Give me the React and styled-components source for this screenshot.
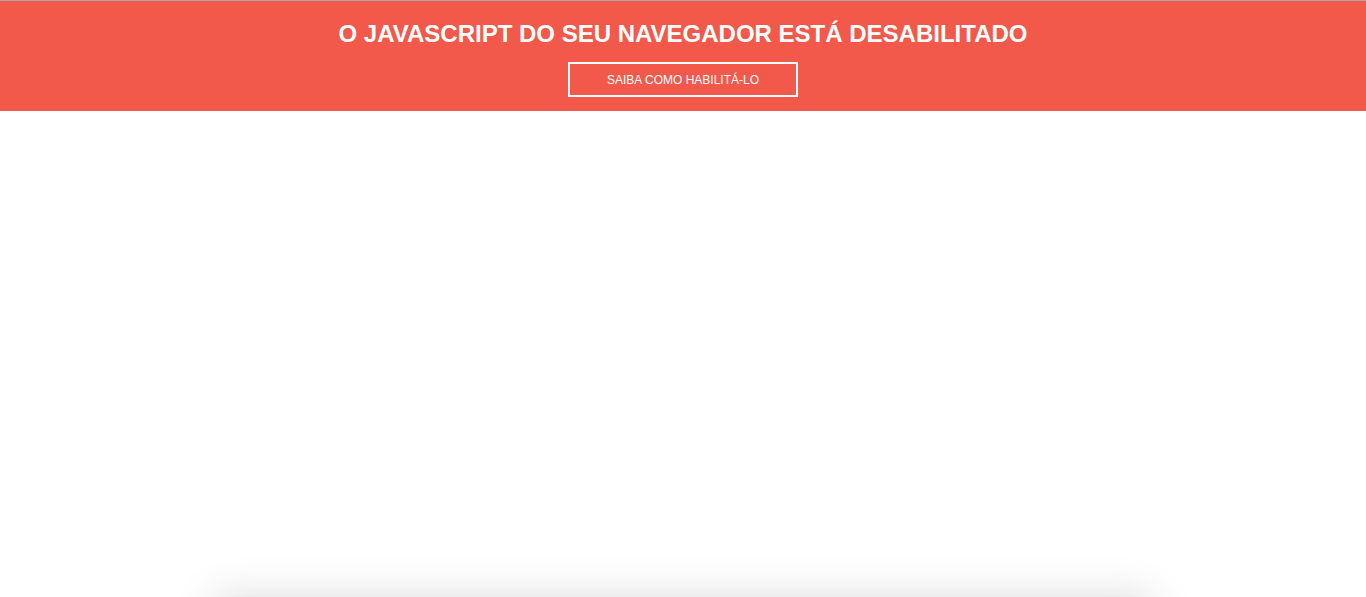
import React from "react";
import styled, { createGlobalStyle } from "styled-components";

const Global = createGlobalStyle`
  html, body {
    margin: 0;
    padding: 0;
    background: #ffffff;
    font-family: "Liberation Sans", Arial, sans-serif;
  }
`;

const Banner = styled.div`
  background-color: #f3594b;
  border-top: 1px solid #a8a8a8;
  height: 111px;
  box-sizing: border-box;
  display: flex;
  flex-direction: column;
  align-items: center;
  padding-top: 19px;
`;

const Title = styled.h1`
  margin: 0;
  color: #ffffff;
  font-size: 24px;
  line-height: 28px;
  font-weight: bold;
`;

const Button = styled.a`
  margin-top: 14px;
  width: 230px;
  height: 35px;
  box-sizing: border-box;
  border: 2px solid #ffffff;
  color: #ffffff;
  font-size: 12px;
  display: flex;
  align-items: center;
  justify-content: center;
  text-decoration: none;
`;

const Body = styled.div`
  height: 486px;
`;

const Card = styled.div`
  width: 940px;
  height: 300px;
  margin: 0 auto;
  background: #ffffff;
  box-shadow: 0 0 40px rgba(0, 0, 0, 0.14);
`;

export default function App() {
  return (
    <>
      <Global />
      <Banner>
        <Title>O JAVASCRIPT DO SEU NAVEGADOR ESTÁ DESABILITADO</Title>
        <Button href="#">SAIBA COMO HABILITÁ-LO</Button>
      </Banner>
      <Body />
      <Card />
    </>
  );
}
